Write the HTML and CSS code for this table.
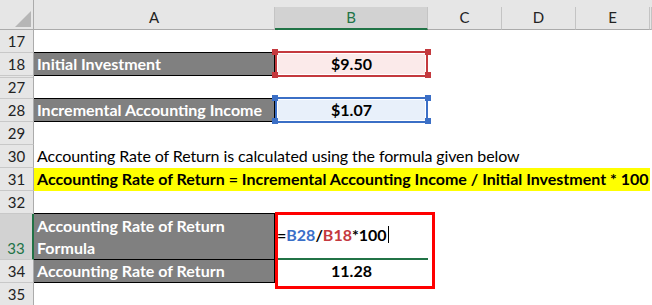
FILE: index.html
```html
<!DOCTYPE html>
<html>
<head>
<meta charset="utf-8">
<title>Accounting Rate of Return</title>
<link rel="stylesheet" href="styles.css">
</head>
<body>
<div class="sheet">
  <div class="row hdr">
    <div class="corner"><span class="tri"></span></div>
    <div class="ch">A</div>
    <div class="ch sel">B</div>
    <div class="ch">C</div>
    <div class="ch">D</div>
    <div class="ch">E</div>
    <div class="ch"></div>
  </div>
  <div class="row"><div class="rh">17</div></div>
  <div class="row">
    <div class="rh">18</div>
    <div class="cell label">Initial Investment</div>
    <div class="cell val ref red">$9.50</div>
  </div>
  <div class="row"><div class="rh after-hidden">27</div></div>
  <div class="row">
    <div class="rh">28</div>
    <div class="cell label">Incremental Accounting Income</div>
    <div class="cell val ref blue">$1.07</div>
  </div>
  <div class="row"><div class="rh">29</div></div>
  <div class="row">
    <div class="rh">30</div>
    <div class="cell note">Accounting Rate of Return is calculated using the formula given below</div>
  </div>
  <div class="row">
    <div class="rh">31</div>
    <div class="cell hl">Accounting Rate of Return = Incremental Accounting Income / Initial Investment * 100</div>
  </div>
  <div class="row"><div class="rh">32</div></div>
  <div class="row tall">
    <div class="rh sel">33</div>
    <div class="cell label wrap">Accounting Rate of Return<br>Formula</div>
    <div class="cell edit">=<span class="fb">B28</span>/<span class="fr">B18</span>*100<span class="caret"></span></div>
  </div>
  <div class="row">
    <div class="rh">34</div>
    <div class="cell label">Accounting Rate of Return</div>
    <div class="cell val">11.28</div>
  </div>
  <div class="row"><div class="rh">35</div></div>
</div>
</body>
</html>
```

FILE: styles.css
```css
* {
  box-sizing: border-box;
  margin: 0;
  padding: 0;
}

html,
body {
  width: 652px;
  height: 305px;
  overflow: hidden;
  background: #ffffff;
}

body {
  font-family: Lato, "Liberation Sans", sans-serif;
  font-size: 15px;
  color: #000000;
}

.sheet {
  width: 652px;
}

.row {
  display: grid;
  grid-template-columns: 34px 241px 153px 74px 74px 74px 1fr;
  height: 23px;
}

.row.tall {
  height: 46px;
}

/* column headers */
.row.hdr {
  height: 30px;
  background: #e6e6e6;
}

.corner {
  display: flex;
  justify-content: flex-end;
  align-items: flex-end;
  padding: 0 2px 2px 0;
  border-right: 1px solid #ababab;
  border-bottom: 1px solid #ababab;
}

.tri {
  width: 0;
  height: 0;
  border-left: 16px solid transparent;
  border-bottom: 16px solid #b6b6b6;
}

.ch {
  margin-top: 7px;
  border-right: 1px solid #c4c4c4;
  border-bottom: 1px solid #ababab;
  text-align: center;
  line-height: 20px;
  color: #222222;
}

.ch.sel {
  background: #d2d2d2;
  color: #217346;
  border-bottom: 2px solid #217346;
}

/* row headers */
.rh {
  display: flex;
  align-items: flex-end;
  justify-content: center;
  background: #e6e6e6;
  border-right: 1px solid #ababab;
  border-bottom: 1px solid #c8c8c8;
  line-height: 22px;
  color: #222222;
}

.rh.sel {
  background: #d2d2d2;
  color: #217346;
  border-right: 2px solid #217346;
}

.rh.after-hidden {
  box-shadow: inset 0 1px 0 #e6e6e6, inset 0 2px 0 #c8c8c8;
}

/* cells */
.cell {
  display: flex;
  align-items: flex-end;
  font-size: 16px;
  line-height: 22px;
  white-space: nowrap;
  position: relative;
}

.label {
  background: #808080;
  color: #ffffff;
  font-weight: 700;
  padding-left: 3px;
  border-right: 1px solid #000000;
  border-bottom: 1px solid #000000;
  box-shadow: 0 -1px 0 #000000;
}

.label.wrap {
  white-space: normal;
}

.val {
  justify-content: center;
  font-weight: 700;
  padding-bottom: 1px;
}

.ref::before {
  content: "";
  position: absolute;
  top: -2px;
  left: 0;
  right: 0;
  bottom: -1px;
  border: 2px solid;
  box-shadow: inset 0 0 0 1px #ffffff;
  z-index: 0;
}

.ref::after {
  content: "";
  position: absolute;
  top: -4px;
  left: -3px;
  right: -3px;
  bottom: -2px;
  background-size: 6px 6px;
  background-repeat: no-repeat;
  background-position: left top, right top, left bottom, right bottom;
  z-index: 2;
}

.val.ref {
  z-index: 1;
}

.red {
  background: #fbeaea;
}

.red::before {
  border-color: #c4393e;
}

.red::after {
  background-image:
    linear-gradient(#c4393e, #c4393e),
    linear-gradient(#c4393e, #c4393e),
    linear-gradient(#c4393e, #c4393e),
    linear-gradient(#c4393e, #c4393e);
}

.blue {
  background: #e8f0fa;
}

.blue::before {
  border-color: #3b6fc6;
}

.blue::after {
  background-image:
    linear-gradient(#3b6fc6, #3b6fc6),
    linear-gradient(#3b6fc6, #3b6fc6),
    linear-gradient(#3b6fc6, #3b6fc6),
    linear-gradient(#3b6fc6, #3b6fc6);
}

.note {
  grid-column: 2 / -1;
  padding-left: 3px;
  padding-bottom: 1px;
  letter-spacing: -0.1px;
}

.hl {
  grid-column: 2 / 7;
  background: #ffff00;
  font-weight: 700;
  padding-left: 3px;
  padding-bottom: 1px;
}

.edit {
  align-items: flex-start;
  padding: 10px 0 0 2px;
  font-weight: 700;
}

.edit::before {
  content: "";
  position: absolute;
  left: 0;
  right: 0;
  bottom: 0;
  height: 2px;
  background: #217346;
}

.edit::after {
  content: "";
  position: absolute;
  top: -2px;
  left: 0;
  width: 154px;
  height: 71px;
  border: 3px solid #ff0000;
  z-index: 3;
}

.fb {
  color: #3a6fc8;
}

.fr {
  color: #c4393e;
}

.caret {
  display: inline-block;
  width: 1px;
  height: 17px;
  margin: 2px 0 0 1px;
  background: #000000;
  vertical-align: top;
}
```
